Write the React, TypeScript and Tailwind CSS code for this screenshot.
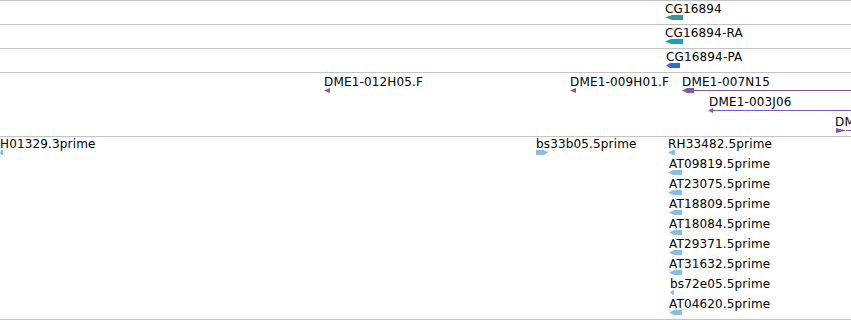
import React from "react";

type Dir = "L" | "R";

const C = {
  gene: "#3e9499",
  ra: "#12a2c0",
  pa: "#2f6ecf",
  dme: "#7a5bac",
  est: "#88bee0",
};

function Arrow({ w, h = 5, dir, color, tip = 5 }: { w: number; h?: number; dir: Dir; color: string; tip?: number }) {
  const m = h / 2;
  const pts =
    dir === "L"
      ? `0,${m} ${tip},0 ${w},0 ${w},${h} ${tip},${h}`
      : `0,0 ${w - tip},0 ${w},${m} ${w - tip},${h} 0,${h}`;
  return (
    <svg width={w} height={h} className="block">
      <polygon points={pts} fill={color} />
    </svg>
  );
}

function Feature({
  x,
  top,
  label,
  gx,
  gw,
  dir,
  color,
  tip,
  line,
}: {
  x: number;
  top: number;
  label: string;
  gx?: number;
  gw: number;
  dir: Dir;
  color: string;
  tip?: number;
  line?: number;
}) {
  const g = gx ?? x;
  return (
    <>
      <div className="absolute whitespace-nowrap leading-[14px] tracking-[0.15px] text-black" style={{ left: x, top }}>
        {label}
      </div>
      <div className="absolute flex items-center" style={{ left: g, top: top + 13 }}>
        <Arrow w={gw} dir={dir} color={color} tip={tip} />
        {line ? <div className="h-px" style={{ width: line, background: color }} /> : null}
      </div>
    </>
  );
}

const ests: [string, number, number, number][] = [
  ["RH33482.5prime", 668, 668, 7],
  ["AT09819.5prime", 669, 668, 14],
  ["AT23075.5prime", 669, 668, 14],
  ["AT18809.5prime", 669, 669, 13],
  ["AT18084.5prime", 669, 669, 13],
  ["AT29371.5prime", 669, 669, 13],
  ["AT31632.5prime", 669, 669, 13],
  ["bs72e05.5prime", 670, 670, 4],
  ["AT04620.5prime", 669, 669, 13],
];

export default function App() {
  return (
    <div
      className="relative w-[851px] h-[320px] overflow-hidden bg-white text-[12px]"
      style={{ fontFamily: '"DejaVu Sans", sans-serif' }}
    >
      <div className="flex flex-col">
        <div className="relative h-[25px] border-t border-b border-[#c3c3c3]">
          <Feature x={665} top={1} label="CG16894" gw={18} dir="L" color={C.gene} tip={7} />
        </div>
        <div className="relative h-[24px] border-b border-[#c3c3c3]">
          <Feature x={665} top={1} label="CG16894-RA" gw={18} dir="L" color={C.ra} tip={6} />
        </div>
        <div className="relative h-[24px] border-b border-[#c3c3c3]">
          <Feature x={666} top={1} label="CG16894-PA" gw={14} dir="L" color={C.pa} tip={4} />
        </div>
        <div className="relative h-[64px] border-b border-[#c3c3c3]">
          <Feature x={324} top={2} label="DME1-012H05.F" gw={6} dir="L" color={C.dme} tip={6} />
          <Feature x={570} top={2} label="DME1-009H01.F" gw={6} dir="L" color={C.dme} tip={6} />
          <Feature x={682} top={2} label="DME1-007N15" gw={12} dir="L" color={C.dme} tip={5} line={170} />
          <Feature x={709} top={22} label="DME1-003J06" gx={708} gw={5} dir="L" color={C.dme} tip={5} line={150} />
          <Feature x={835} top={42} label="DM" gx={836} gw={10} dir="R" color={C.dme} tip={10} line={10} />
        </div>
        <div className="relative h-[183px] border-b border-[#c3c3c3]">
          <Feature x={0} top={0} label="H01329.3prime" gw={3} dir="L" color={C.est} tip={1} />
          <Feature x={536} top={0} label="bs33b05.5prime" gw={12} dir="R" color={C.est} tip={4} />
          {ests.map(([l, x, gx, gw], i) => (
            <Feature key={l} x={x} top={i * 20} label={l} gx={gx} gw={gw} dir="L" color={C.est} tip={gw > 6 ? 5 : 3} />
          ))}
        </div>
      </div>
    </div>
  );
}
